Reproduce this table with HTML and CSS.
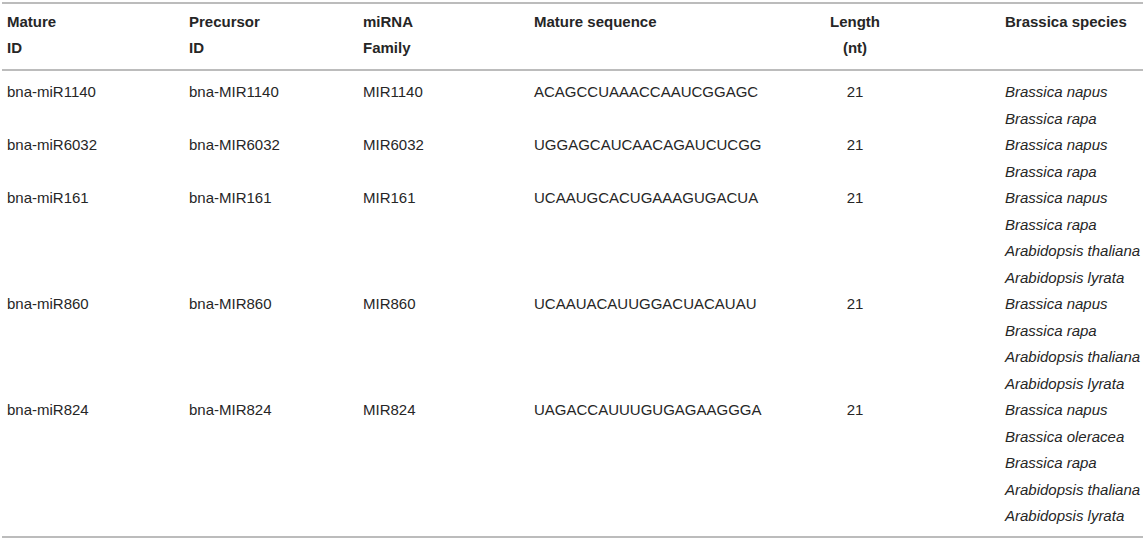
FILE: index.html
```html
<!DOCTYPE html>
<html>
<head>
<meta charset="utf-8">
<link rel="stylesheet" href="styles.css">
</head>
<body>
<table class="mirna">
  <colgroup>
    <col class="c1"><col class="c2"><col class="c3"><col class="c4"><col class="c5"><col class="c6">
  </colgroup>
  <thead>
    <tr>
      <th>Mature<br>ID</th>
      <th>Precursor<br>ID</th>
      <th>miRNA<br>Family</th>
      <th>Mature sequence</th>
      <th class="center">Length<br>(nt)</th>
      <th class="species">Brassica species</th>
    </tr>
  </thead>
  <tbody>
    <tr class="first">
      <td>bna-miR1140</td><td>bna-MIR1140</td><td>MIR1140</td><td>ACAGCCUAAACCAAUCGGAGC</td><td class="center">21</td>
      <td class="species"><i>Brassica napus</i><br><i>Brassica rapa</i></td>
    </tr>
    <tr>
      <td>bna-miR6032</td><td>bna-MIR6032</td><td>MIR6032</td><td>UGGAGCAUCAACAGAUCUCGG</td><td class="center">21</td>
      <td class="species"><i>Brassica napus</i><br><i>Brassica rapa</i></td>
    </tr>
    <tr>
      <td>bna-miR161</td><td>bna-MIR161</td><td>MIR161</td><td>UCAAUGCACUGAAAGUGACUA</td><td class="center">21</td>
      <td class="species"><i>Brassica napus</i><br><i>Brassica rapa</i><br><i>Arabidopsis thaliana</i><br><i>Arabidopsis lyrata</i></td>
    </tr>
    <tr>
      <td>bna-miR860</td><td>bna-MIR860</td><td>MIR860</td><td>UCAAUACAUUGGACUACAUAU</td><td class="center">21</td>
      <td class="species"><i>Brassica napus</i><br><i>Brassica rapa</i><br><i>Arabidopsis thaliana</i><br><i>Arabidopsis lyrata</i></td>
    </tr>
    <tr class="last">
      <td>bna-miR824</td><td>bna-MIR824</td><td>MIR824</td><td>UAGACCAUUUGUGAGAAGGGA</td><td class="center">21</td>
      <td class="species"><i>Brassica napus</i><br><i>Brassica oleracea</i><br><i>Brassica rapa</i><br><i>Arabidopsis thaliana</i><br><i>Arabidopsis lyrata</i></td>
    </tr>
  </tbody>
</table>
</body>
</html>
```

FILE: styles.css
```css
html, body {
  margin: 0;
  padding: 0;
  background: #ffffff;
}

body {
  padding-top: 2px;
  padding-left: 2px;
}

.mirna {
  width: 1141px;
  border-collapse: collapse;
  table-layout: fixed;
  font-family: "Liberation Sans", Arial, Helvetica, sans-serif;
  font-size: 15px;
  color: #262626;
  border-top: 2px solid #bcbcbc;
  border-bottom: 2px solid #bcbcbc;
}

.c1 { width: 182px; }
.c2 { width: 174px; }
.c3 { width: 171px; }
.c4 { width: 211px; }
.c5 { width: 230px; }
.c6 { width: auto; }

.mirna th {
  font-weight: bold;
  text-align: left;
  vertical-align: top;
  line-height: 26px;
  padding: 5px 5px 8px 5px;
  border-bottom: 2px solid #bcbcbc;
  white-space: nowrap;
}

.mirna td {
  vertical-align: top;
  line-height: 26.5px;
  padding: 0 5px;
  white-space: nowrap;
}

.mirna tr.first td {
  padding-top: 8px;
}

.mirna tr.last td {
  padding-bottom: 6px;
}

.mirna .center {
  text-align: center;
}

.mirna .species {
  padding-left: 35px;
}

.mirna i {
  font-style: italic;
}
```
